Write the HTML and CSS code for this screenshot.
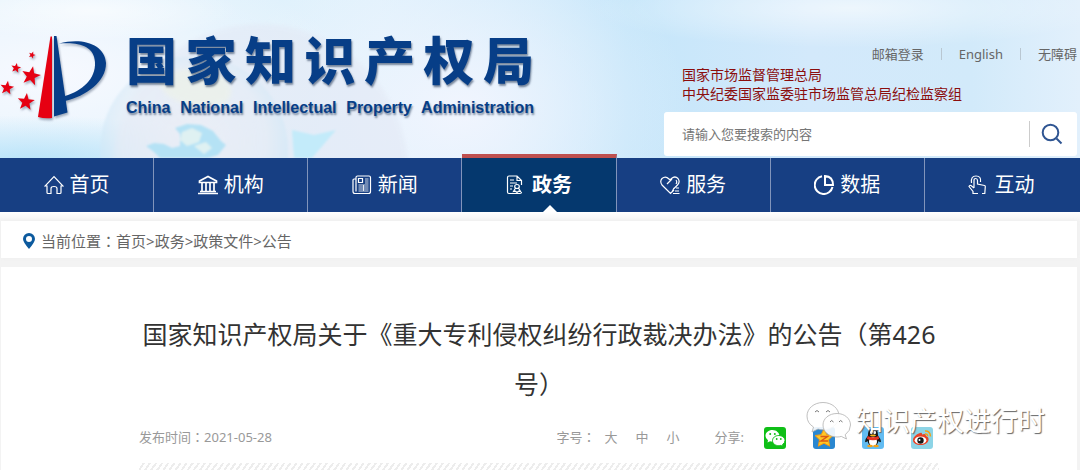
FILE: index.html
```html
<!DOCTYPE html>
<html lang="zh-CN">
<head>
  <meta charset="utf-8">
  <title>国家知识产权局</title>
  <link rel="stylesheet" href="styles.css">
</head>
<body>
  <header class="header">
    <svg class="globe" viewBox="0 0 340 158" aria-hidden="true">
      <defs>
        <radialGradient id="globe-fill" cx="50%" cy="45%" r="55%">
          <stop offset="0" stop-color="#eceef6" stop-opacity=".8"/>
          <stop offset=".7" stop-color="#e6edf6" stop-opacity=".6"/>
          <stop offset="1" stop-color="#c8e6f7" stop-opacity=".6"/>
        </radialGradient>
        <filter id="soft"><feGaussianBlur stdDeviation="2"/></filter>
        <filter id="edge"><feGaussianBlur stdDeviation="1"/></filter>
      </defs>
      <circle cx="170" cy="172" r="148" fill="#e3e9f5" opacity=".6" filter="url(#soft)"/>
      <circle cx="104" cy="150" r="94" fill="url(#globe-fill)" filter="url(#edge)"/>
      <path d="M66 80q30-18 60-8 24 16 10 30-34 12-60-8z" fill="#eef3e6" opacity=".6" filter="url(#soft)"/>
      <g filter="url(#edge)">
        <path d="M56 146l8-3 10 1 8 4 8-2v-12l-5-6 12-4 14 1 12 6 8 10 5 4-8 10-10 3H70l-6-6z" fill="#b5e2f5"/>
        <path d="M92 132l10-4 10 5-3 9-12 4-7-6zM104 146l12-4 6 6-8 6z" fill="#dff1f2"/>
        <path d="M202 130l22 5 22-5-12 14-12 14h-18z" fill="#c3ebfa"/>
      </g>
    </svg>

    <a class="brand" href="#">
      <svg class="emblem" viewBox="0 0 110 90" aria-hidden="true">
        <defs>
          <path id="star" d="M0-10L2.5-3.4 9.5-3.1 4 1.3 5.9 8.1 0 4.2-5.9 8.1-4 1.3-9.5-3.1-2.5-3.4z"/>
        </defs>
        <g fill="#e60012">
          <path d="M50.500 4.500h1.500V86Q45 87 38 85z"/>
          <use href="#star" transform="translate(32 23) rotate(20) scale(.36)"/>
          <use href="#star" transform="translate(16 36) rotate(10) scale(.52)"/>
          <use href="#star" transform="translate(31 44) rotate(12) scale(1)"/>
          <use href="#star" transform="translate(7 56) rotate(8) scale(.72)"/>
          <use href="#star" transform="translate(26 70) rotate(6) scale(.9)"/>
        </g>
        <g fill="#073e87">
          <path d="M54 4h2.500L67.500 80.500 54 84.500z"/>
          <path d="M59 11.500C82 5 105 12 106 31c0 19-20 33-41 38v-5c17-5 31-17 30-34C94 13 78 10 59 11.500z"/>
        </g>
      </svg>
      <span class="brand-text">
        <span class="brand-cn">国家知识产权局</span>
        <span class="brand-en">China National Intellectual Property Administration</span>
      </span>
    </a>

    <div class="header-side">
      <div class="top-links">
        <a href="#">邮箱登录</a>
        <a href="#">English</a>
        <a href="#">无障碍</a>
      </div>
      <div class="parent-links">
        <a href="#">国家市场监督管理总局</a>
        <a href="#">中央纪委国家监委驻市场监管总局纪检监察组</a>
      </div>
      <form class="search">
        <input class="search-input" type="text" placeholder="请输入您要搜索的内容" aria-label="搜索">
        <button class="search-btn" type="button" aria-label="搜索">
          <svg viewBox="0 0 22 22" width="22" height="22" fill="none" stroke="#2f5592" stroke-width="2">
            <circle cx="9.500" cy="9.500" r="7.800"/>
            <path d="M15.500 15.500l5 5"/>
          </svg>
        </button>
      </form>
    </div>
  </header>

  <nav class="nav">
    <a class="nav-item" href="#">
      <svg class="nav-icon" viewBox="0 0 20 20"><path d="M3 11H1L10 1.500 19 11h-2v6.500q0 1-1 1h-3v-5q0-2-3-2t-3 2v5H4q-1 0-1-1z"/></svg>
      <span class="nav-label">首页</span>
    </a>
    <a class="nav-item" href="#">
      <svg class="nav-icon" viewBox="0 0 20 20"><path d="M1.500 6L10 1.500 18.500 6v1.500h-17zM4 8v8M8 8v8M12 8v8M16 8v8M2 16.500h16M0 18.500h20" stroke-width="1.700"/></svg>
      <span class="nav-label">机构</span>
    </a>
    <a class="nav-item" href="#">
      <svg class="nav-icon" viewBox="0 0 20 20"><path d="M4 4V2.500Q4 1 5.500 1h11.500q1.500 0 1.500 1.500v14q0 2-2 2H3q-2 0-2-2V5q0-1 1-1h2v12.500M6.500 3.500h4v4h-4z"/><path stroke-width=".8" d="M13 4h3.500M13 6h3.500M13 8h3.500M6.500 10h10M6.500 12h10M6.500 14h10M6.500 16h10M11.500 10v6"/></svg>
      <span class="nav-label">新闻</span>
    </a>
    <a class="nav-item active" href="#">
      <svg class="nav-icon" viewBox="0 0 20 20"><path d="M15.500 10V5.500L11 1H3Q1.500 1 1.500 2.500V17q0 1.500 1.500 1.500h11q1.500 0 1.500-1.500M11 1v4.500h4.500M4 5h4M4 8h7M4 11h3M4 14h2"/><path d="M8.700 11.500q0-2 2.300-2t2.300 2-2.300 2-2.300-2zM9.500 13l-2 3.500 2-.3 1.500 1.300 1.500-1.300 2 .3-2-3.500"/></svg>
      <span class="nav-label">政务</span>
    </a>
    <a class="nav-item" href="#">
      <svg class="nav-icon" viewBox="0 0 20 20"><path d="M14 15l-3.500 3.500L2 10Q-.5 6.500 2 3.500 5.500.500 9 4l1 1 1.500-1.500Q15 .500 18 3.500q2.500 3.500-.5 6.500L14 13.500M7 9l5-5M16 5q1.500 2 0 4M12 17l2-4M16 13h3M15 16h4M13 18.500h6.500"/></svg>
      <span class="nav-label">服务</span>
    </a>
    <a class="nav-item" href="#">
      <svg class="nav-icon" viewBox="0 0 20 20"><path d="M8 1.200A9 9 0 1 0 18.500 12M11 1v9h8Q19 1.500 11 1z" stroke-width="2"/></svg>
      <span class="nav-label">数据</span>
    </a>
    <a class="nav-item" href="#">
      <svg class="nav-icon" viewBox="0 0 20 20"><path d="M3.500 8Q2.500 1 8 1t4.500 6M6 13V5.500Q6 3.500 7.700 3.500T9.500 5.500V9l7 1.500q.8.200.8 1l-.5 7H14M6 13l-3-2.500Q1.500 10 1 11.500l4 5v2h5"/></svg>
      <span class="nav-label">互动</span>
    </a>
  </nav>

  <main class="main">
    <div class="crumbs">
      <svg class="pin" viewBox="0 0 12 16" aria-hidden="true"><path fill="#0c5a9e" fill-rule="evenodd" d="M6 0a6 6 0 0 1 6 6q0 3-6 10Q0 9 0 6a6 6 0 0 1 6-6zm0 3a3 3 0 1 0 0 6 3 3 0 0 0 0-6z"/></svg>
      <span>当前位置<span class="colon" lang="zh-TW">：</span><a href="#">首页</a>&gt;<a href="#">政务</a>&gt;<a href="#">政策文件</a>&gt;<a href="#">公告</a></span>
    </div>

    <article class="article">
      <h1 class="title">国家知识产权局关于《重大专利侵权纠纷行政裁决办法》的公告（第426号）</h1>
      <div class="meta">
        <span>发布时间<span class="colon" lang="zh-TW">：</span>2021-05-28</span>
        <div class="tools">
          <span class="sizes">字号<span class="colon" lang="zh-TW">：</span>
            <button type="button">大</button>
            <button type="button">中</button>
            <button type="button">小</button>
          </span>
          <span class="share-label">分享:</span>
          <div class="share">
            <a href="#" aria-label="微信">
              <svg viewBox="0 0 22 22"><rect width="22" height="22" rx="3" fill="#0fbf17"/><path fill="#fff" d="M8.500 3C4.500 3 1.500 5.500 1.500 9q0 2.500 2.500 4.300L3.500 15.500 6 14.300q1.200.4 2.700.4C12.500 14.700 15.500 12 15.500 9s-3-6-7-6z"/><path fill="#fff" stroke="#0fbf17" d="M14.800 8.500c-3.500 0-6.300 2.200-6.300 5.200s3 5 6.300 5q1 0 2-.3l2.200 1.200-.5-2q2.500-1.700 2.500-4c0-3-3-5.100-6.200-5.100z"/><g fill="#0fbf17"><circle cx="6.200" cy="7" r="1"/><circle cx="10.800" cy="7" r="1"/><circle cx="12.700" cy="12" r=".9"/><circle cx="16.800" cy="12" r=".9"/></g></svg>
            </a>
            <a href="#" aria-label="QQ空间">
              <svg viewBox="0 0 22 22"><rect width="22" height="22" rx="3" fill="#2a87d0"/><path fill="#ffc726" stroke="#f39a12" d="M11 2l2.800 5.700 6.200.8-4.500 4.300 1.200 6.400L11 16.200l-5.700 3 1.200-6.400L2 8.500l6.200-.8z"/><path fill="none" stroke="#dc5a14" stroke-width="1.500" d="M7.500 9.500h7L8 14h7"/></svg>
            </a>
            <a href="#" aria-label="QQ">
              <svg viewBox="0 0 22 22"><rect width="22" height="22" rx="3" fill="#62bcf2"/><path fill="#171717" d="M11 1.500c4 0 5 3 5 7q2.500 3 3 6-1 1.500-2.500-.5-1 5-5.500 5t-5.500-5q-1.500 2-2.500.5.500-3 3-6c0-4 1-7 5-7z"/><ellipse cx="11" cy="14.500" rx="4" ry="4.500" fill="#fff"/><path fill="#e83424" d="M5.500 9q5.500 2.500 11 0l.5 3q-6 2.500-12 0z"/><ellipse cx="9.300" cy="5.500" rx="1.300" ry="1.800" fill="#fff"/><ellipse cx="12.700" cy="5.500" rx="1.300" ry="1.800" fill="#fff"/><ellipse cx="11" cy="8.500" rx="3" ry="1" fill="#f8b418"/><ellipse cx="8" cy="19" rx="2.800" ry="1.300" fill="#f5a114"/><ellipse cx="14" cy="19" rx="2.800" ry="1.300" fill="#f5a114"/></svg>
            </a>
            <a href="#" aria-label="微博">
              <svg viewBox="0 0 22 22"><rect width="22" height="22" rx="3" fill="#8dd4e6"/><path fill="#e94225" d="M9 6q2.500-1 2 1.500 4-1.500 4 1.500 3 1 2.500 4c-.7 3.500-4 5-8 5s-7.500-1.800-7.500-5S6 7 9 6z"/><ellipse cx="9.500" cy="13.200" rx="5.800" ry="3.800" fill="#fff"/><circle cx="9.500" cy="13.500" r="3.200" fill="#171717"/><circle cx="8.500" cy="13" r="1" fill="#fff"/><path fill="none" stroke="#f5a114" stroke-width="1.500" d="M14 4q5-.5 5.500 5.500M14 7q2.500-.5 2.700 2.300"/></svg>
            </a>
          </div>
        </div>
      </div>
      <div class="hatch"></div>

      <div class="watermark">
        <svg viewBox="0 0 46 40" aria-hidden="true">
          <g fill="#fff" fill-opacity=".9" stroke="#b0b0b0" stroke-width=".8">
            <path d="M17 1.500C8 1.500 1 7.500 1 15q0 7 6.500 11L6 31l6-3q2.500.8 5 .8c9 0 16-6.300 16-13.800S26 1.500 17 1.500z"/>
            <path d="M31 12.500c-8 0-14 5-14 11.500s6 12 14 12q2.300 0 4.300-.6l5.200 2.600-1.300-4.200q5.300-4 5.300-9.800c0-6.500-6-11.500-13.500-11.500z"/>
          </g>
          <g fill="none" stroke="#777">
            <path d="M9 11q2-3 4 0M20 11q2-3 4 0M24 21q1.500-3 3.500 0M33 21q1.500-3 3.500 0"/>
          </g>
        </svg>
        <span>知识产权进行时</span>
      </div>
    </article>
  </main>
</body>
</html>
```
FILE: styles.css
```css
* {
  box-sizing: border-box;
}

body {
  margin: 0;
  background-color: #f3f3f3;
  font-family: "Noto Sans", "Noto Sans CJK SC", sans-serif;
  color: #666;
}

a {
  color: inherit;
  text-decoration: none;
}

svg {
  display: block;
}

/* fullwidth colon centred in its cell */
.colon {
  font-family: "Noto Sans CJK TC", sans-serif;
}

/* header */
.header {
  position: relative;
  display: flex;
  justify-content: space-between;
  height: 158px;
  padding-right: 3px;
  background:
    radial-gradient(ellipse 150px 30px at 90px 10px, rgba(255, 255, 255, .6), transparent),
    radial-gradient(ellipse 260px 40px at 850px 8px, rgba(255, 255, 255, .6), transparent),
    radial-gradient(ellipse 220px 50px at 30px 165px, #b5e2f9, transparent),
    radial-gradient(ellipse 300px 120px at 50px 75px, #f7f9ff, transparent),
    radial-gradient(ellipse 230px 180px at 460px 110px, #f1f5fe, transparent),
    linear-gradient(90deg, #e3f3fc 0%, #dff1fc 35%, #c5e6fa 58%, #d3e9fb 75%, #d2eafa 90%, #e2f0fc 100%);
}

.globe {
  position: absolute;
  left: 90px;
  bottom: 0;
  width: 340px;
  height: 158px;
}

.brand {
  position: relative;
  display: flex;
  gap: 16px;
  padding-top: 32px;
  color: #073e87;
  text-shadow: 1px 2px 2px rgba(40, 60, 90, .6);
}

.emblem {
  width: 110px;
  height: 90px;
  filter: drop-shadow(1px 2px 1px rgba(40, 60, 90, .4));
}

.brand-text {
  display: flex;
  flex-direction: column;
  width: 408px;
}

.brand-cn {
  font-size: 51px;
  font-weight: 900;
  line-height: 56px;
  text-align-last: justify;
}

.brand-en {
  font-family: "Liberation Sans", Arial, sans-serif;
  font-size: 16px;
  font-weight: bold;
  line-height: 40px;
  text-align-last: justify;
  white-space: nowrap;
}

.header-side {
  position: relative;
  display: flex;
  flex-direction: column;
  width: 413px;
  padding-top: 44px;
}

.top-links {
  display: flex;
  justify-content: flex-end;
  align-items: center;
  height: 20px;
  font-size: 13px;
  line-height: 12px;
}

.top-links a + a {
  margin-left: 17px;
  padding-left: 17px;
  border-left: 1px solid #b9c7d2;
}

.parent-links {
  display: flex;
  flex-direction: column;
  padding: 1px 0 9px 18px;
  color: #8b0d0d;
  font-size: 14px;
  line-height: 19px;
}

.search {
  display: flex;
  align-items: center;
  height: 44px;
  border-radius: 3px;
  background-color: #fff;
}

.search-input {
  flex: 1;
  min-width: 0;
  padding: 0 18px;
  border: none;
  outline: none;
  background: none;
  font-family: inherit;
  font-size: 13px;
}

.search-input::placeholder {
  color: #757575;
}

.search-btn {
  display: flex;
  justify-content: center;
  width: 48px;
  padding: 2px 4px 2px 0;
  border: none;
  border-left: 1px solid #ccc;
  background: none;
  cursor: pointer;
}

/* navigation */
.nav {
  position: relative;
  display: flex;
  height: 54px;
  padding-right: 2px;
  background-color: #173f83;
}

.nav-item {
  flex: 1;
  display: flex;
  justify-content: center;
  align-items: center;
  gap: 6px;
  border-right: 1px solid #8194bb;
  color: #fff;
  font-size: 20px;
  line-height: 54px;
}

.nav-item:last-child {
  border-right: none;
}

.nav-item.active {
  margin-top: -4px;
  border-top: 4px solid #bf504f;
  background-color: #05386e;
  font-weight: bold;
}

.nav-icon {
  width: 20px;
  height: 20px;
  fill: none;
  stroke: #fff;
  stroke-width: 1.2;
}

.nav-label {
  position: relative;
}

.active .nav-label::after {
  content: "";
  position: absolute;
  left: 50%;
  bottom: 0;
  margin-left: -9px;
  border: 7px solid transparent;
  border-top: none;
  border-bottom-color: #fff;
}

/* content */
.main {
  padding: 9px 3px 0 1px;
  background: linear-gradient(#fff, #f3f3f3 9px);
}

.crumbs {
  display: flex;
  align-items: center;
  gap: 6px;
  height: 37px;
  margin-bottom: 9px;
  padding: 2px 22px 0;
  background-color: #fff;
  box-shadow: 0 0 4px #eee;
  font-size: 15px;
}

.pin {
  width: 12px;
  height: 16px;
}

.article {
  position: relative;
  padding: 42px 138px 0;
  background-color: #fff;
}

.title {
  margin: 0;
  color: #333;
  font-size: 25px;
  font-weight: normal;
  line-height: 50px;
  text-align: center;
}

.meta {
  display: flex;
  justify-content: space-between;
  align-items: center;
  height: 54px;
  color: #999;
  font-size: 13px;
}

.tools {
  display: flex;
  align-items: center;
  padding-right: 6px;
}

.sizes {
  display: flex;
  align-items: center;
}

.sizes button {
  width: 31px;
  padding: 0;
  border: none;
  background: none;
  color: inherit;
  font-family: inherit;
  font-size: 13px;
  cursor: pointer;
}

.share-label {
  margin: 0 20px 0 26px;
}

.share {
  display: flex;
  gap: 27px;
  padding-top: 4px;
}

.share svg {
  width: 22px;
  height: 22px;
}

.hatch {
  height: 7px;
  background: repeating-linear-gradient(125deg, #fff 0 3px, #ededed 3px 5px);
}

.watermark {
  position: absolute;
  right: 32px;
  bottom: 29px;
  display: flex;
  align-items: center;
  gap: 4px;
  color: #fff;
  font-size: 27px;
  line-height: 40px;
  text-shadow: 1px 1px 1px #666;
}

.watermark svg {
  width: 46px;
  height: 40px;
}
```
